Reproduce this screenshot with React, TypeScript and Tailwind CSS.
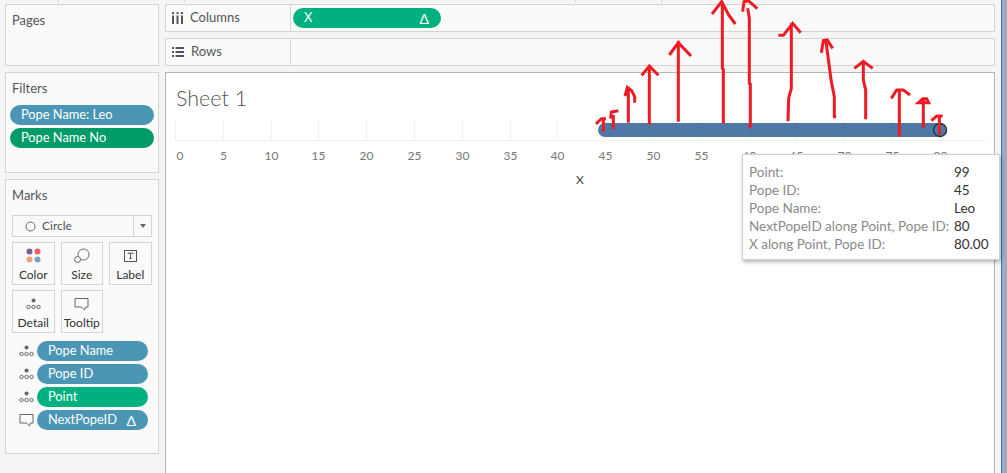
import React from "react";

const font = { fontFamily: '"Lato", "Liberation Sans", sans-serif' };

function DetailIcon() {
  return (
    <svg width="15" height="12" viewBox="0 0 15 12" fill="none" className="shrink-0">
      <circle cx="7.5" cy="2.5" r="2" fill="#666" />
      <circle cx="2.5" cy="9" r="1.7" stroke="#666" />
      <circle cx="7.5" cy="9" r="1.7" stroke="#666" />
      <circle cx="12.5" cy="9" r="1.7" stroke="#666" />
    </svg>
  );
}

function TooltipIcon() {
  return (
    <svg width="15" height="14" viewBox="0 0 15 14" fill="none" className="shrink-0">
      <path d="M1 1.5h13v8.5h-2.5l-1 3-3-3H1z" stroke="#666" />
    </svg>
  );
}

function Pill({ label, color, delta, className }: { label: string; color: string; delta?: boolean; className: string }) {
  return (
    <div className={`flex h-5 items-center justify-between rounded-full pl-[11px] pr-3 text-[12.8px] text-white ${color} ${className}`}>
      <span>{label}</span>
      {delta && <span className="text-[14px]">Δ</span>}
    </div>
  );
}

function CardButton({ label, children }: { label: string; children: React.ReactNode }) {
  return (
    <div className="flex h-[43px] w-[42.5px] flex-col items-center border border-[#d4d4d4] text-[12px] text-[#333]">
      <div className="flex h-[24px] items-center pt-[2px]">{children}</div>
      <span>{label}</span>
    </div>
  );
}

function ShelfRow({ label, icon, children }: { label: string; icon: React.ReactNode; children?: React.ReactNode }) {
  return (
    <div className="flex h-7 border border-[#d4d4d4] bg-[#fafafa]">
      <div className="flex w-[125px] items-center gap-[7px] border-r border-[#d4d4d4] pl-[6px] text-[13px] text-[#555]">
        {icon}
        <span>{label}</span>
      </div>
      <div className="flex flex-1 items-center pl-[2px]">{children}</div>
    </div>
  );
}

const ticks = [
  [0, 175.5], [5, 223.5], [10, 271.5], [15, 318.5], [20, 366.5], [25, 414.5], [30, 462.5], [35, 510.5], [40, 557.5],
  [45, 605.5], [50, 653.5], [55, 701.5], [60, 749.5], [65, 796.5], [70, 844.5], [75, 892.5], [80, 940.5],
];

function Chart() {
  return (
    <svg width="828" height="120" viewBox="166 118 828 120" className="block" style={font}>
      {ticks.map(([v, x]) => (
        <g key={v}>
          <line x1={x} x2={x} y1="120" y2="141" stroke="#f0f0f0" />
          <text x={v === 0 ? x + 4.5 : x} y="160" textAnchor="middle" fontSize="12" fill="#777">{v}</text>
        </g>
      ))}
      <line x1="175" x2="986" y1="140.5" y2="140.5" stroke="#f0f0f0" />
      <rect x="598" y="123" width="349" height="14" rx="7" fill="#4e79a7" />
      <circle cx="940" cy="130" r="6.5" fill="none" stroke="#1f2d3d" strokeWidth="1.3" />
      <text x="580" y="184" textAnchor="middle" fontSize="12" fill="#444">X</text>
    </svg>
  );
}

// hand drawn red arrows sitting on top of the screenshot
function Scribbles() {
  const lines = [
    "M40 395V358M18 372L34 356H48",
    "M70 388V345M62 356L64 336L85 332",
    "M115 368V265M105 288L112 262L125 272L134 290V308",
    "M178 374V200M155 226L178 198L205 226",
    "M265 365V122M238 165L265 128L303 168",
    "M400 370V208L397 205V5M366 42L395 5L416 45L436 72",
    "M481 385V252L478 250V55L473 25M458 35L462 5L475 2L502 26",
    "M594 364L596 295L604 265V70M565 106H580L608 70L632 98",
    "M738 352L733 350V290L724 245L708 125M694 158L700 122L712 120L728 145",
    "M827 358V270L820 240V185M793 205L820 184L848 205",
    "M928 410V270M904 295L920 270H940L960 285",
    "M1000 383V295M985 308H1016L1010 296H998Z",
    "M1048 405V350M1024 362L1040 348H1058",
  ];
  return (
    <svg width="417" height="150" viewBox="0 0 1251 450" fill="none" className="pointer-events-none absolute left-[590px] top-0">
      {lines.map((d) => (
        <path key={d} d={d} stroke="#ed1c24" strokeWidth="9" />
      ))}
    </svg>
  );
}

const tooltipRows = [
  ["Point:", "99"],
  ["Pope ID:", "45"],
  ["Pope Name:", "Leo"],
  ["NextPopeID along Point, Pope ID:", "80"],
  ["X along Point, Pope ID:", "80.00"],
];

export default function App() {
  return (
    <div className="relative flex h-[473px] w-[1007px] overflow-hidden bg-[#f5f5f5]" style={font}>
      <div className="w-[1001px] shrink-0">
        {/* top edge ticks */}
        <div className="flex h-1 pl-[58px]">
          <div className="h-[2px] w-[126px] border-l border-[#d4d4d4]" />
          <div className="h-[2px] w-[391px] border-l border-[#d4d4d4]" />
          <div className="h-[2px] w-[86px] border-l border-[#d4d4d4]" />
          <div className="h-[2px] w-px bg-[#d4d4d4]" />
        </div>

        <div className="flex gap-[6px] pl-[5px]">
          {/* left column */}
          <div className="flex w-[154px] flex-col gap-[6px]">
            <div className="h-[62px] border border-[#d4d4d4] bg-[#fafafa] px-[6px] pt-[6px] text-[13px] text-[#555]">Pages</div>

            <div className="h-[101px] border border-[#d4d4d4] bg-[#fafafa] pt-[6px] text-[13px] text-[#555]">
              <div className="px-[6px]">Filters</div>
              <div className="mt-[6.5px] flex flex-col gap-[3px] px-1">
                <Pill label="Pope Name: Leo" color="bg-[#4b96b4]" className="" />
                <Pill label="Pope Name No" color="bg-[#009b69]" className="" />
              </div>
            </div>

            <div className="h-[275px] border border-[#d4d4d4] bg-[#fafafa] pt-[6px] text-[13px] text-[#555]">
              <div className="px-[6px]">Marks</div>
              <div className="mx-[6px] mt-[9.5px] flex h-[22px] items-center border border-[#d4d4d4] pl-3 text-[12px]">
                <svg width="11" height="11" viewBox="0 0 11 11" fill="none" className="mr-[6px]">
                  <circle cx="5.5" cy="5.5" r="4.5" stroke="#666" />
                </svg>
                <span className="flex-1">Circle</span>
                <div className="flex h-full w-[18px] items-center justify-center border-l border-[#d4d4d4]">
                  <div className="h-0 w-0 border-x-[3.5px] border-t-[4px] border-x-transparent border-t-[#666]" />
                </div>
              </div>

              <div className="mx-[6px] mt-[5px] flex flex-wrap gap-x-[6px] gap-y-[5px]">
                <CardButton label="Color">
                  <svg width="15" height="15" viewBox="0 0 15 15">
                    <circle cx="3.5" cy="3.5" r="3" fill="#76618f" />
                    <circle cx="11.5" cy="3.5" r="3" fill="#ef5b6d" />
                    <circle cx="3.5" cy="11.5" r="3" fill="#f2a277" />
                    <circle cx="11.5" cy="11.5" r="3" fill="#7f9fc9" />
                  </svg>
                </CardButton>
                <CardButton label="Size">
                  <svg width="16" height="15" viewBox="0 0 16 15" fill="none" stroke="#666">
                    <circle cx="9.5" cy="6.5" r="5.5" />
                    <circle cx="3.5" cy="11.5" r="3" fill="#fafafa" />
                  </svg>
                </CardButton>
                <CardButton label="Label">
                  <svg width="13" height="12" viewBox="0 0 13 12" fill="none" stroke="#555">
                    <rect x="0.5" y="0.5" width="12" height="11" />
                    <path d="M4 4V3.2H9V4M6.5 3.2V8.5M5.3 8.5H7.7" />
                  </svg>
                </CardButton>
                <CardButton label="Detail">
                  <DetailIcon />
                </CardButton>
                <CardButton label="Tooltip">
                  <TooltipIcon />
                </CardButton>
              </div>

              <div className="mt-[8px] flex flex-col gap-[3px] pl-[13px] pr-[10px]">
                {[
                  { label: "Pope Name", color: "bg-[#4b96b4]", icon: <DetailIcon /> },
                  { label: "Pope ID", color: "bg-[#4b96b4]", icon: <DetailIcon /> },
                  { label: "Point", color: "bg-[#00b180]", icon: <DetailIcon /> },
                  { label: "NextPopeID", color: "bg-[#4b96b4]", icon: <TooltipIcon />, delta: true },
                ].map((p) => (
                  <div key={p.label} className="flex items-center gap-[3px]">
                    {p.icon}
                    <Pill label={p.label} color={p.color} delta={p.delta} className="flex-1" />
                  </div>
                ))}
              </div>
            </div>
          </div>

          {/* right column */}
          <div className="flex w-[830px] flex-col gap-[6px]">
            <ShelfRow
              label="Columns"
              icon={
                <svg width="11" height="12" viewBox="0 0 11 12" fill="#555">
                  <path d="M0 0h2v2H0zM4.5 0h2v2h-2zM9 0h2v2H9zM0 3.5h2V12H0zM4.5 3.5h2V12h-2zM9 3.5h2V12H9z" />
                </svg>
              }
            >
              <Pill label="X" color="bg-[#00b180]" delta className="w-[148px]" />
            </ShelfRow>
            <ShelfRow
              label="Rows"
              icon={
                <svg width="12" height="10" viewBox="0 0 12 10" fill="#555">
                  <path d="M0 0h2v2H0zM3.5 0H12v2H3.5zM0 4h2v2H0zM3.5 4H12v2H3.5zM0 8h2v2H0zM3.5 8H12v2H3.5z" />
                </svg>
              }
            />
            <div className="h-[420px] border-x border-t border-[#b4b4b4] bg-white">
              <div className="pl-[10px] pt-[13px] text-[21.5px] font-light leading-6 text-[#555]">Sheet 1</div>
              <div className="mt-[8px]">
                <Chart />
              </div>
            </div>
          </div>
        </div>
      </div>

      {/* window edge */}
      <div className="flex-1 border-l border-[#1a7fd0] bg-[#a3aabd]" />

      <Scribbles />

      {/* tooltip */}
      <div className="absolute left-[742px] top-[154px] grid h-[106px] w-[258px] grid-cols-[205px_1fr] content-start border border-[#d0d0d0] bg-white pl-[6px] pt-[8px] text-[13.5px] leading-[18px] shadow-[1px_2px_4px_rgba(0,0,0,0.3)]">
        {tooltipRows.map(([k, v]) => (
          <React.Fragment key={k}>
            <span className="whitespace-nowrap text-[#8a8a8a]">{k}</span>
            <span className="text-[#333]">{v}</span>
          </React.Fragment>
        ))}
      </div>
    </div>
  );
}
